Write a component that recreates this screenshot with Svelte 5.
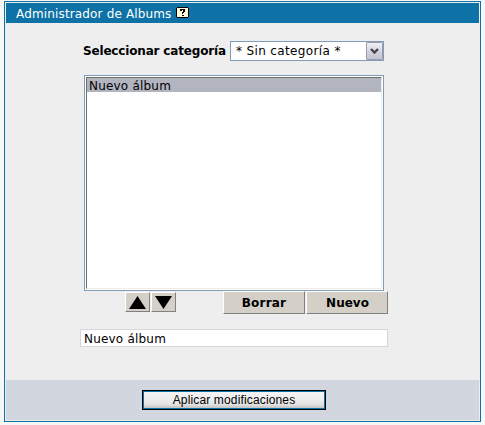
<script>
  const albums = ['Nuevo álbum'];
  let selected = $state(0);
</script>

<main class="page">
  <section class="panel">
    <header class="title"><span class="t-title">Administrador de Albums</span>
      <svg class="help" width="13" height="11" viewBox="0 0 13 11" shape-rendering="crispEdges">
        <path fill="#000" d="M1 0h11v1h1v9h-1v1H1v-1H0V1h1z" />
        <path fill="#fffbdc" d="M1 1h11v9H1z" />
        <path fill="#000" d="M4 2h5v1H4zM4 3h2v1H4zM7 3h2v2H7zM6 5h2v1H6zM6 6h1v1H6zM6 8h2v1H6z" />
      </svg>
    </header>
    <div class="body">
      <div class="category">
        <span class="t-label">Seleccionar categoría</span>
        <div class="select">
          <span class="t-select">* Sin categoría *</span>
          <span class="arrow">
            <svg width="9" height="7" viewBox="0 0 9 7"><path d="M1 1L4.5 4.5L8 1" fill="none" stroke="#454550" stroke-width="2.4" /></svg>
          </span>
        </div>
      </div>
      <div class="list">
        <div class="list-inner">
          {#each albums as album, i}
            <div class="option" class:selected={i === selected}><span class="t-item">{album}</span></div>
          {/each}
        </div>
      </div>
      <div class="actions">
        <button class="square" aria-label="Subir"><svg width="17" height="13" viewBox="0 0 17 13"><path d="M8.5 0L17 13H0z" /></svg></button>
        <button class="square" aria-label="Bajar"><svg width="17" height="13" viewBox="0 0 17 13"><path d="M0 0H17L8.5 13z" /></svg></button>
        <button class="wide first"><span class="t-del">Borrar</span></button>
        <button class="wide"><span class="t-new">Nuevo</span></button>
      </div>
      <div class="field"><span class="t-item">{albums[selected]}</span></div>
    </div>
    <footer><button class="apply"><span class="t-apply">Aplicar modificaciones</span></button></footer>
  </section>
</main>

<style>
  :global(body) { background: #f7f7f7; }
  * { box-sizing: border-box; }
  .page {
    width: 485px; height: 425px; padding: 1px 4px 3px; overflow: hidden;
    font-family: "DejaVu Sans", Verdana, sans-serif; font-size: 12px; color: #000;
  }
  span { white-space: nowrap; }
  .panel {
    width: 477px; height: 421px; padding: 1px; border: 1px solid #0f72a6;
    background: #eee; display: flex; flex-direction: column;
  }
  .title {
    height: 20px; flex: none; display: flex; align-items: center; padding: 1px 0 0 10px;
    background: #0f72a6; color: #fff;
  }
  .t-title { width: 156px; letter-spacing: 0.15px; }
  .help { margin: 0 0 2px 4px; }
  .body { flex: 1; display: flex; flex-direction: column; padding: 18px 0 0 74px; }
  .category { display: flex; align-items: center; height: 20px; padding-left: 3px; }
  .t-label { font-weight: bold; width: 147px; flex: none; letter-spacing: -0.17px; }
  .t-select { letter-spacing: 0.36px; }
  .t-item { letter-spacing: 0.2px; }
  .t-del { letter-spacing: 0.2px; }
  .t-new { padding-left: 1px; }
  .t-apply { letter-spacing: 0.15px; }
  .select {
    width: 154px; height: 20px; border: 1px solid #7f9db9; background: #fff;
    display: flex; align-items: center; justify-content: space-between; padding-left: 5px;
  }
  .arrow {
    width: 17px; height: 18px; border: 1px solid #9b9baa; border-radius: 1px;
    background: linear-gradient(#f0f0f5, #d0d1dd 60%, #c4c4d2);
    display: flex; align-items: center; justify-content: center;
  }
  .list {
    width: 300px; height: 216px; margin: 14px 0 0 4px; border: 1px solid #7f9db9;
    background: #fff; padding: 1px;
  }
  .list-inner {
    height: 212px; border: 1px solid #f1ecdf; border-top-color: #716f64; border-left-color: #716f64;
  }
  .option { height: 14px; padding: 1px 0 0 2px; display: flex; align-items: center; }
  .selected { background: #b2b4bf; }
  .actions { display: flex; align-items: flex-start; gap: 1px; padding-left: 45px; height: 23px; }
  button {
    margin: 0; padding: 0; font: inherit; color: #000; background: #d4d0c8;
    border: 1px solid #fff; border-right-color: #808080; border-bottom-color: #808080;
    display: flex; align-items: center; justify-content: center;
  }
  .square { width: 25px; height: 20px; margin-top: 1px; }
  .wide { width: 82px; height: 23px; font-weight: bold; }
  .first { margin-left: 46px; }
  .field {
    width: 308px; height: 18px; margin-top: 15px; padding: 1px 0 0 3px;
    border: 1px solid #d2d6de; background: #fff; display: flex; align-items: center;
  }
  footer { height: 40px; flex: none; margin-bottom: 0; background: #d2d6de; padding: 10px 0 0 136px; }
  .apply {
    width: 184px; height: 20px; border: 1px solid #000; box-shadow: inset 0 0 0 1px #0f72a6;
    background: linear-gradient(#f6f6f6, #eee 45%, #e2e2e2 75%, #bbb);
    font: 12px "Liberation Sans", Arial, sans-serif;
  }
</style>
